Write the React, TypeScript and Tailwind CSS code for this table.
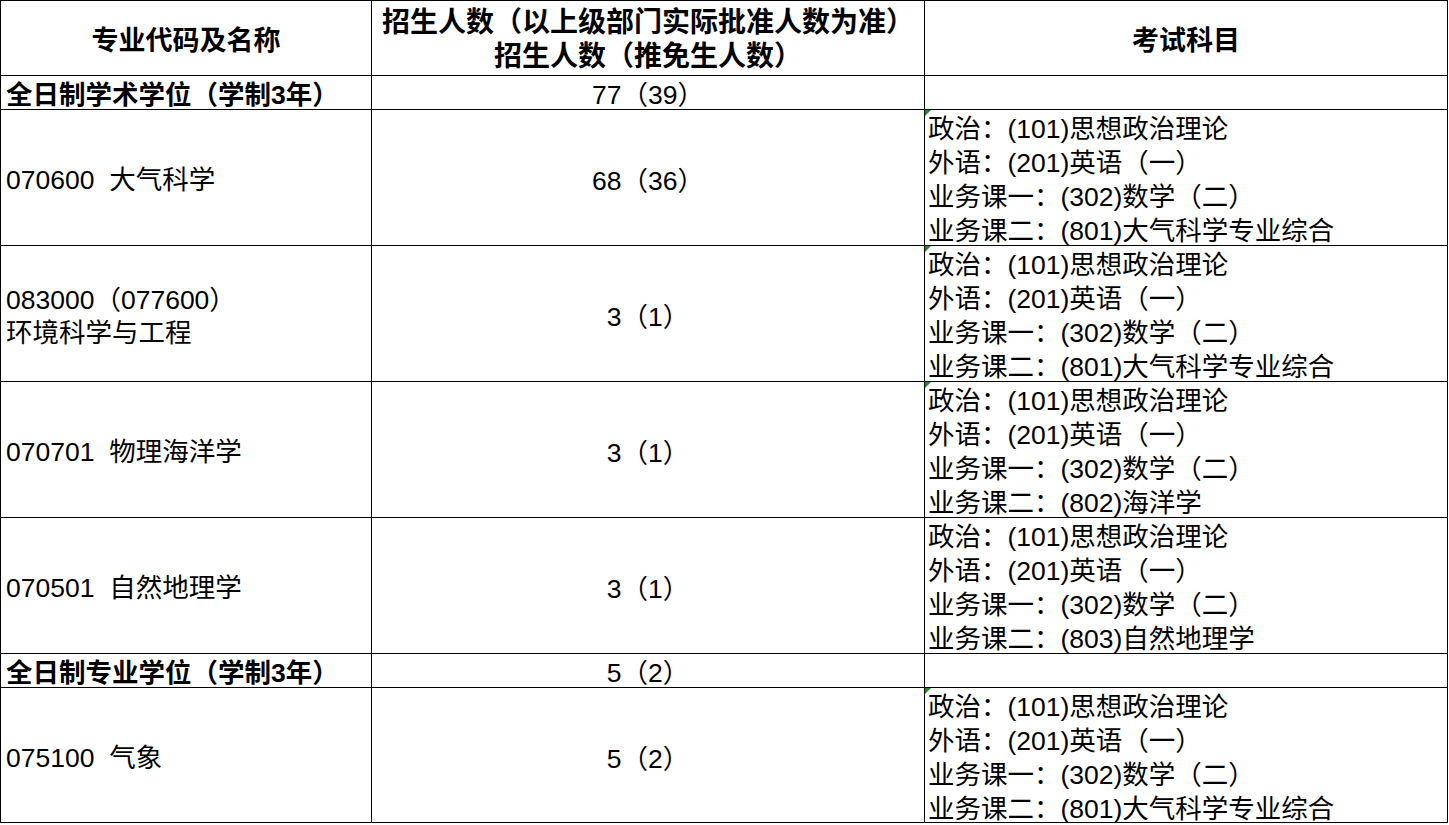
import React from "react";

type Row = {
  name: string[];
  count: string;
  subjects: string[];
  mark?: boolean;
};

const subjects = (last: string) => [
  "政治：(101)思想政治理论",
  "外语：(201)英语（一）",
  "业务课一：(302)数学（二）",
  `业务课二：${last}`,
];

const academic: Row[] = [
  { name: ["070600  大气科学"], count: "68（36）", subjects: subjects("(801)大气科学专业综合"), mark: true },
  { name: ["083000（077600）", "环境科学与工程"], count: "3（1）", subjects: subjects("(801)大气科学专业综合"), mark: true },
  { name: ["070701  物理海洋学"], count: "3（1）", subjects: subjects("(802)海洋学"), mark: true },
  { name: ["070501  自然地理学"], count: "3（1）", subjects: subjects("(803)自然地理学") },
];

const professional: Row[] = [
  { name: ["075100  气象"], count: "5（2）", subjects: subjects("(801)大气科学专业综合"), mark: true },
];

const font = "font-['Liberation_Sans','Noto_Sans_CJK_SC',sans-serif]";

function GroupRow({ title, count }: { title: string; count: string }) {
  return (
    <>
      <div className="h-[34px] border-r border-b border-black flex items-end pl-[5px] font-bold text-[26.5px] leading-[28px] whitespace-pre">
        {title}
      </div>
      <div className="h-[34px] border-r border-b border-black flex items-end justify-center text-[26.5px] leading-[28px] whitespace-pre">
        {count}
      </div>
      <div className="h-[34px] border-r border-b border-black" />
    </>
  );
}

function DataRow({ row, height }: { row: Row; height: string }) {
  return (
    <>
      <div className={`${height} border-r border-b border-black flex flex-col justify-center pt-[6px] pl-[5px] text-[26.5px] leading-[33px] whitespace-pre`}>
        {row.name.map((n) => (
          <div key={n}>{n}</div>
        ))}
      </div>
      <div className={`${height} border-r border-b border-black flex items-center justify-center pt-[7px] text-[26.5px] leading-[34px] whitespace-pre`}>
        {row.count}
      </div>
      <div className={`${height} relative border-r border-b border-black pt-[2px] pl-[3px] text-[26.5px] leading-[34px] whitespace-pre overflow-hidden`}>
        {row.mark && (
          <div className="absolute top-0 left-0 w-0 h-0 border-t-[6px] border-r-[6px] border-t-[#1f8a2a] border-r-transparent" />
        )}
        {row.subjects.map((s) => (
          <div key={s}>{s}</div>
        ))}
      </div>
    </>
  );
}

export default function App() {
  return (
    <div className={`w-[1449px] h-[825px] bg-white text-black ${font}`}>
      <div className="grid grid-cols-[371px_553px_523px] border-l border-t border-black w-[1448px]">
        <div className="h-[75px] border-r border-b border-black flex items-center justify-center pt-[6px] font-bold text-[27px]">
          专业代码及名称
        </div>
        <div className="h-[75px] border-r border-b border-black flex flex-col items-center justify-center pt-[4px] font-bold text-[28px] leading-[34px]">
          <div>招生人数（以上级部门实际批准人数为准）</div>
          <div>招生人数（推免生人数）</div>
        </div>
        <div className="h-[75px] border-r border-b border-black flex items-center justify-center pt-[6px] font-bold text-[27px]">
          考试科目
        </div>

        <GroupRow title="全日制学术学位（学制3年）" count="77（39）" />
        {academic.map((r) => (
          <DataRow key={r.name[0]} row={r} height="h-[136px]" />
        ))}

        <GroupRow title="全日制专业学位（学制3年）" count="5（2）" />
        {professional.map((r) => (
          <DataRow key={r.name[0]} row={r} height="h-[135px]" />
        ))}
      </div>
    </div>
  );
}
